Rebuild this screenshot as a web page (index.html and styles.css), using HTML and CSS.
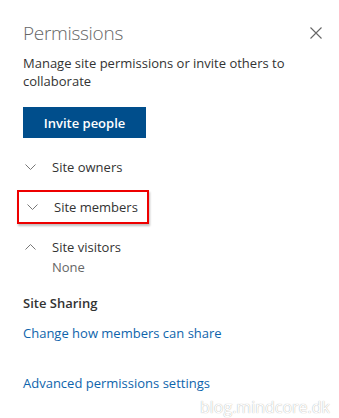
FILE: index.html
```html
<!DOCTYPE html>
<html lang="en">
<head>
    <meta charset="UTF-8">
    <meta name="viewport" content="width=device-width, initial-scale=1.0">
    <title>Permissions</title>
    <link rel="stylesheet" href="styles.css">
</head>
<body>
    <div class="panel">
        <div class="header">
            <h1>Permissions</h1>
            <button class="close" aria-label="Close">
                <svg width="12" height="12" viewBox="0 0 12 12"><path d="M0.5 0.5 L11.5 11.5 M11.5 0.5 L0.5 11.5" stroke="#666" stroke-width="1.1" fill="none"/></svg>
            </button>
        </div>

        <p class="intro">Manage site permissions or invite others to collaborate</p>

        <button class="invite">Invite people</button>

        <div class="groups">
            <div class="group">
                <div class="group-row">
                    <svg class="chev" width="11" height="6" viewBox="0 0 11 6"><path d="M0.5 0.5 L5.5 5.5 L10.5 0.5" stroke="#777" stroke-width="1" fill="none"/></svg>
                    <span>Site owners</span>
                </div>
            </div>
            <div class="group">
                <div class="group-row marked">
                    <svg class="chev" width="11" height="6" viewBox="0 0 11 6"><path d="M0.5 0.5 L5.5 5.5 L10.5 0.5" stroke="#777" stroke-width="1" fill="none"/></svg>
                    <span>Site members</span>
                </div>
            </div>
            <div class="group">
                <div class="group-row">
                    <svg class="chev" width="11" height="6" viewBox="0 0 11 6"><path d="M0.5 5.5 L5.5 0.5 L10.5 5.5" stroke="#777" stroke-width="1" fill="none"/></svg>
                    <span>Site visitors</span>
                </div>
                <div class="group-empty">None</div>
            </div>
        </div>

        <h2>Site Sharing</h2>
        <a class="link" href="#">Change how members can share</a>
        <a class="link advanced" href="#">Advanced permissions settings</a>

        <div class="watermark">blog.mindcore.dk</div>
    </div>
</body>
</html>
```

FILE: styles.css
```css
body {
    margin: 0;
    font-family: "Open Sans", "Noto Sans", Arial, sans-serif;
    background: #fff;
    color: #333;
}
.panel {
    position: relative;
    height: 418px;
    padding: 0 17px 0 23px;
    box-sizing: border-box;
}
.header {
    display: flex;
    justify-content: space-between;
    align-items: center;
    padding-top: 19px;
}
h1 {
    margin: 0;
    font-size: 19px;
    font-weight: 300;
    letter-spacing: -0.3px;
    color: #666;
    line-height: 28px;
}
.close {
    background: none;
    border: none;
    padding: 0;
    width: 12px;
    height: 12px;
    display: flex;
}
.intro {
    margin: 7px 0 0;
    font-size: 13px;
    line-height: 18px;
    color: #333;
}
.invite {
    margin-top: 17px;
    width: 123px;
    height: 31px;
    background-color: #004e8c;
    color: #fff;
    border: none;
    font-family: inherit;
    font-size: 13px;
    font-weight: 600;
}
.groups {
    margin-top: 19px;
}
.group-row {
    display: flex;
    align-items: center;
    gap: 16px;
    height: 20px;
    font-size: 13px;
    color: #333;
    margin-bottom: 20px;
    padding-left: 2px;
}
.group-row.marked {
    margin-left: -6px;
    padding: 5px 0 5px 8px;
    width: 120px;
    margin-top: -7px;
    margin-bottom: 13px;
    border: 2px solid #e00;
    box-shadow: 1px 2px 2px rgba(0,0,0,0.25);
}
.group-empty {
    margin: -20px 0 0 29px;
    font-size: 13px;
    color: #666;
    line-height: 20px;
}
h2 {
    margin: 17px 0 0;
    font-size: 13px;
    font-weight: 600;
    color: #333;
}
.link {
    display: block;
    margin-top: 12px;
    font-size: 13px;
    color: #0e64ac;
    text-decoration: none;
}
.link.advanced {
    margin-top: 32px;
}
.watermark {
    position: absolute;
    right: 9px;
    bottom: 0;
    font-size: 16px;
    color: #fff;
    text-shadow: 0 0 1px #999;
}
```
